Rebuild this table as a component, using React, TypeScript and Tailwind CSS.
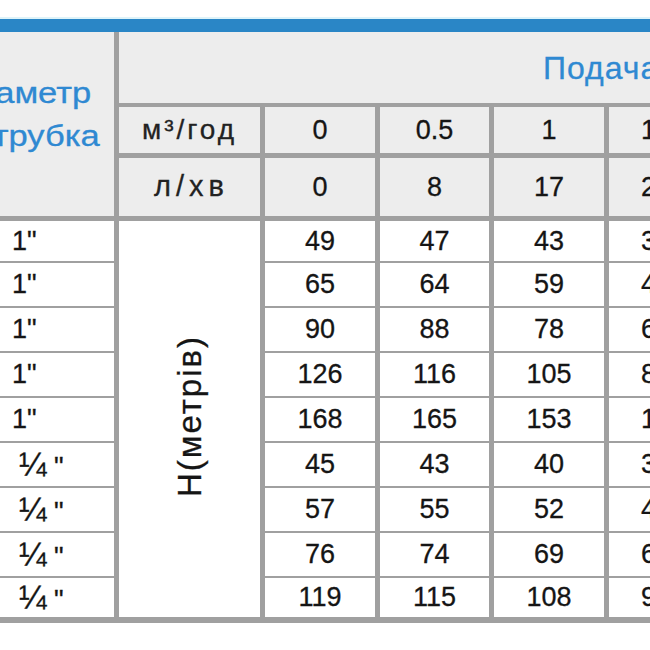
const bodyRows: { d: string; v: number[] }[] = [
  { d: '1"', v: [49, 47, 43, 38, 33] },
  { d: '1"', v: [65, 64, 59, 49, 42] },
  { d: '1"', v: [90, 88, 78, 67, 57] },
  { d: '1"', v: [126, 116, 105, 89, 76] },
  { d: '1"', v: [168, 165, 153, 138, 118] },
  { d: '¼ "', v: [45, 43, 40, 37, 32] },
  { d: '¼ "', v: [57, 55, 52, 47, 41] },
  { d: '¼ "', v: [76, 74, 69, 64, 56] },
  { d: '¼ "', v: [119, 115, 108, 99, 86] },
];

const rowH = ["h-[40px]", "h-[43px]", "h-[43px]", "h-[43px]", "h-[43px]", "h-[43px]", "h-[43px]", "h-[43px]", "h-[39px]"];
const colW = ["w-[110px]", "w-[109px]", "w-[110px]", "w-[110px]", "w-[110px]"];
// 4th column sits at the right edge, its numbers start at a fixed offset
const align = (i: number) => (i === 3 ? "justify-start pl-[32px]" : "justify-center");

const m3 = ["0", "0.5", "1", "1.5", "2"];
const lmin = ["0", "8", "17", "25", "33"];

export default function App() {
  return (
    <div className="w-[650px] h-[650px] overflow-hidden bg-white font-['Liberation_Sans',Arial,sans-serif] text-[#151515] [-webkit-text-stroke:0.3px_currentColor]">
      <div className="h-[17px]" />
      <div className="h-[2px] bg-[#def3f9]" />
      <div className="h-[13px] bg-[#2a86c6]" />

      <div className="ml-[-50px] w-max bg-[#a0a0a0] pb-[6px]">
        {/* header */}
        <div className="flex gap-[5px]">
          <div className="w-[164px] h-[184px] bg-[#ededed] flex items-center justify-center pb-[20px] pr-[9px] text-center text-[30px] leading-[43px] text-[#2f89d2]">
            <div className="scale-x-115">
              Діаметр
              <br />
              патрубка
            </div>
          </div>
          <div className="flex flex-col">
            <div className="h-[71px] mb-[4px] bg-[#ededed] flex items-center pl-[424px] text-[32px] tracking-[1px] text-[#2f89d2] whitespace-nowrap">
              Подача
            </div>
            <div className="flex gap-[5px] mb-[5px]">
              <div className="w-[141px] h-[46px] bg-[#ededed] flex items-center justify-center text-[28px] tracking-[3px] text-[#222]">
                м³/год
              </div>
              {m3.map((x, i) => (
                <div key={i} className={`${colW[i]} h-[46px] bg-[#ededed] flex items-center ${align(i)} text-[27px]`}>
                  {x}
                </div>
              ))}
            </div>
            <div className="flex gap-[5px]">
              <div className="w-[141px] h-[58px] bg-[#ededed] flex items-center justify-center text-[29px] tracking-[5px] pl-[4px] text-[#222]">
                л/хв
              </div>
              {lmin.map((x, i) => (
                <div key={i} className={`${colW[i]} h-[58px] bg-[#ededed] flex items-center ${align(i)} text-[27px]`}>
                  {x}
                </div>
              ))}
            </div>
          </div>
        </div>

        {/* body */}
        <div className="flex gap-[5px] mt-[5px]">
          <div className="w-[164px] flex flex-col gap-[2px]">
            {bodyRows.map((r, i) => (
              <div key={i} className={`${rowH[i]} bg-white flex items-center`}>
                {r.d === '1"' ? (
                  <span className="pl-[62px] text-[27px]">{r.d}</span>
                ) : (
                  <span className="pl-[69px] text-[33px] leading-none">
                    ¼<span className="text-[27px]">&nbsp;"</span>
                  </span>
                )}
              </div>
            ))}
          </div>
          <div className="w-[141px] bg-white flex items-center justify-center">
            <span className="[writing-mode:vertical-rl] rotate-180 text-[33px] tracking-[2px] pt-[6px]">Н(метрів)</span>
          </div>
          <div className="flex flex-col gap-[2px]">
            {bodyRows.map((r, i) => (
              <div key={i} className="flex gap-[5px]">
                {r.v.map((n, j) => (
                  <div key={j} className={`${colW[j]} ${rowH[i]} bg-white flex items-center ${align(j)} text-[27px]`}>
                    {n}
                  </div>
                ))}
              </div>
            ))}
          </div>
        </div>
      </div>
    </div>
  );
}
